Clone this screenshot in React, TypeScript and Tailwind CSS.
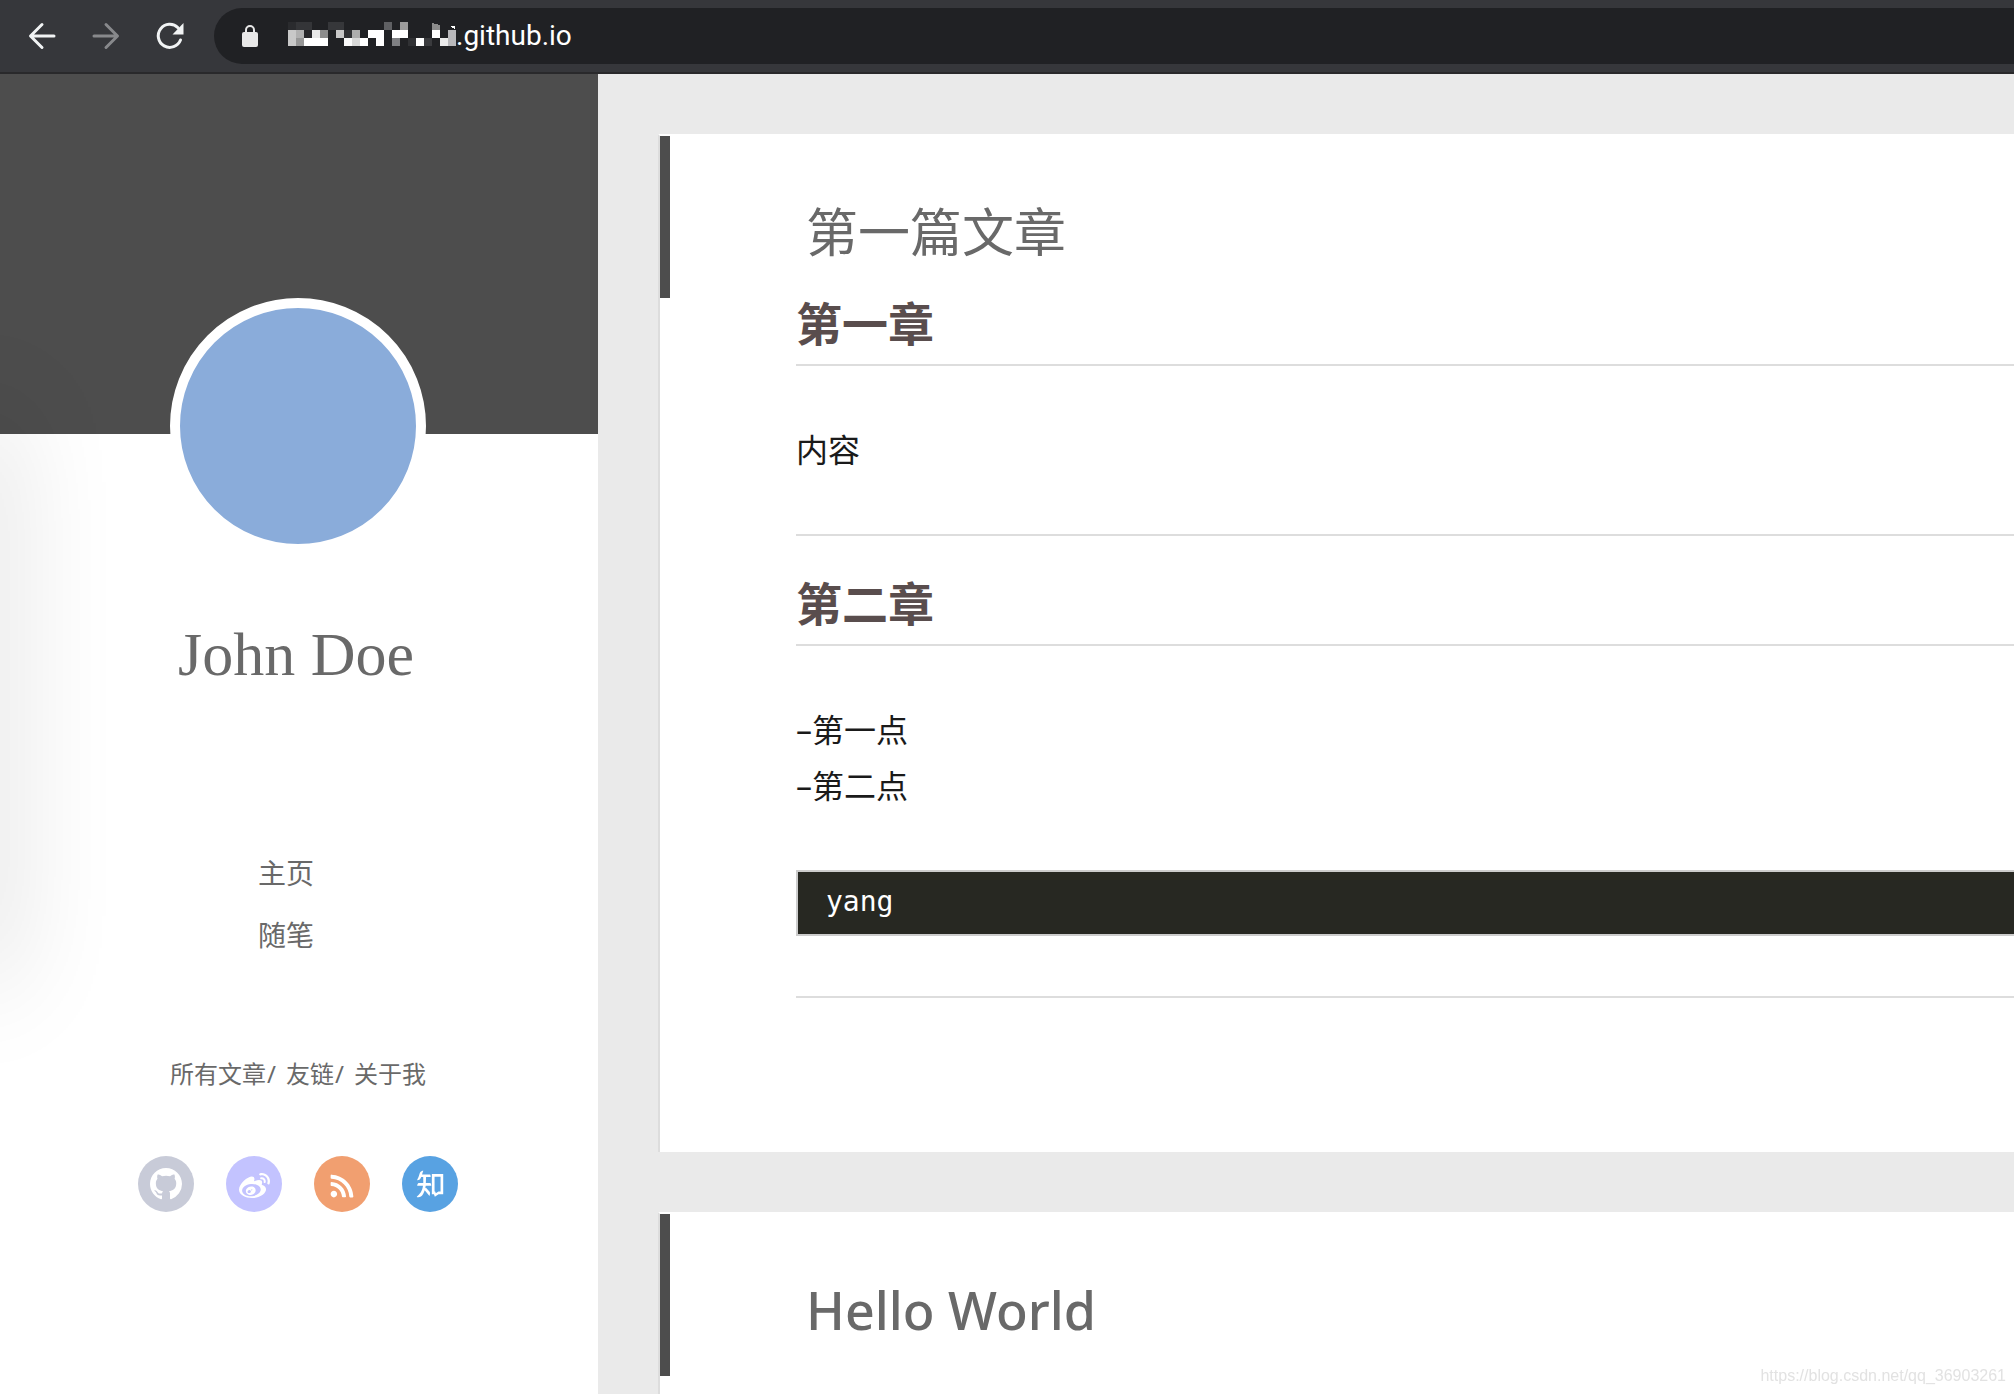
import { AiOutlineZhihu } from "react-icons/ai";
import { FaRss, FaWeibo } from "react-icons/fa";

const menu = ["主页", "随笔"];
const subMenu = ["所有文章", "友链", "关于我"];

// [column, row, fill] of the blurred part of the address
const blurCells: [number, number, string][] = [
    [0, 0, "#2a2b2e"], [1, 0, "#343538"], [2, 0, "#343538"], [5, 0, "#36373a"], [6, 0, "#36373a"],
    [12, 0, "#5f6063"], [14, 0, "#9c9c9c"],
    [0, 1, "#c8c8c8"], [1, 1, "#b0b0b0"], [2, 1, "#262629"], [3, 1, "#e8e8e8"], [4, 1, "#8c8c8c"],
    [6, 1, "#c8c8c8"], [7, 1, "#303134"], [8, 1, "#adadad"], [10, 1, "#ffffff"], [11, 1, "#ffffff"],
    [13, 1, "#ffffff"], [14, 1, "#ffffff"], [18, 1, "#ffffff"], [20, 1, "#b8b8bb"],
    [0, 2, "#c8c8c8"], [1, 2, "#969696"], [2, 2, "#ffffff"], [3, 2, "#ffffff"], [4, 2, "#ffffff"],
    [7, 2, "#fafafa"], [8, 2, "#d8d8d8"], [9, 2, "#ffffff"], [11, 2, "#ffffff"], [13, 2, "#7f8083"],
    [15, 2, "#303134"], [16, 2, "#ffffff"], [17, 2, "#3a3b3e"], [19, 2, "#ebebeb"], [20, 2, "#b8b8bb"],
];

const BrowserBar = () => {
    return (
        <header className="flex items-center h-[74px] shrink-0 bg-[#36373b] border-b-2 border-[#29292b]">
            <div className="flex items-center gap-7 pl-6 pr-[26px]">
                <button aria-label="Back" className="size-9 text-[#f1f3f4]">
                    <svg viewBox="0 0 36 36" fill="none" stroke="currentColor" strokeWidth="3" strokeLinecap="round" strokeLinejoin="round">
                        <path d="M30 18H7M18 6.500L6.500 18L18 29.500" />
                    </svg>
                </button>
                <button aria-label="Forward" className="size-9 text-[#88898c]">
                    <svg viewBox="0 0 36 36" fill="none" stroke="currentColor" strokeWidth="3" strokeLinecap="round" strokeLinejoin="round">
                        <path d="M6 18H29M18 6.500L29.500 18L18 29.500" />
                    </svg>
                </button>
                <button aria-label="Reload" className="size-9 text-[#f1f3f4]">
                    <svg viewBox="0 0 36 36" fill="none">
                        <path d="M28.500 22A11.500 11.500 0 1 1 26 9.800" stroke="currentColor" strokeWidth="3" strokeLinecap="round" />
                        <path d="M31.500 5V16.500H20.500Z" fill="currentColor" />
                    </svg>
                </button>
            </div>
            <div className="flex flex-1 items-center h-14 pl-7 bg-[#202124] rounded-l-full">
                <svg className="w-4 h-[22px] shrink-0" viewBox="0 0 16 22">
                    <path d="M4 9V5a4 4 0 0 1 8 0V9" fill="none" stroke="#e8e8e8" strokeWidth="2" />
                    <rect y="7" width="16" height="15" rx="2" fill="#e8e8e8" />
                </svg>
                <svg className="w-[168px] h-6 ml-[30px] mb-1 shrink-0" viewBox="0 0 168 24" shapeRendering="crispEdges">
                    {blurCells.map(([col, row, fill]) => (
                        <rect key={`${col}-${row}`} x={col * 8} y={row * 8} width="8" height="8" fill={fill} />
                    ))}
                    <path d="M144 1L152 3V8H144Z" fill="#8c8c8c" />
                    <path d="M162 4H167V7Z" fill="#ffffff" />
                </svg>
                <input
                    aria-label="Address"
                    defaultValue=".github.io"
                    className="flex-1 min-w-0 h-10 bg-transparent text-[28px] text-white outline-none font-['Roboto',sans-serif]"
                />
            </div>
        </header>
    );
};

const Sidebar = () => {
    return (
        <aside className="relative w-[598px] shrink-0 bg-white text-[#696969]">
            <div className="h-[360px] bg-[#4d4d4d]" />
            <div className="flex flex-col items-center -mt-[136px] pr-0.5">
                <div className="size-64 rounded-full border-10 border-white bg-[#8aacda]" />
                <h1 className="mt-16 mr-1 text-[62px] leading-[72px] font-['Liberation_Serif',serif]">
                    <a href="#">John Doe</a>
                </h1>
                <nav className="mt-[152px] mr-6">
                    <ul>
                        {menu.map((item) => (
                            <li key={item} className="text-[28px] leading-[62px]">
                                <a href="#">{item}</a>
                            </li>
                        ))}
                    </ul>
                </nav>
                <nav className="flex mt-[90px] text-2xl leading-9">
                    {subMenu.map((item, i) => (
                        <div key={item} className="flex">
                            <a href="#">{item}</a>
                            {i < subMenu.length - 1 && <span className="w-5 pl-px">/</span>}
                        </div>
                    ))}
                </nav>
                <div className="flex gap-8 mt-16 text-white">
                    <a href="#" aria-label="GitHub" className="flex items-center justify-center size-14 rounded-full bg-[#c8cbd8]">
                        <svg className="size-8" viewBox="0 0 16 16" fill="currentColor">
                            <path d="M8 0C3.580 0 0 3.580 0 8c0 3.540 2.290 6.530 5.470 7.590.4.070.550-.170.550-.380 0-.190-.010-.820-.010-1.490-2.010.370-2.530-.490-2.690-.940-.090-.230-.480-.940-.820-1.130-.280-.150-.680-.520-.010-.530.630-.010 1.080.580 1.230.820.720 1.210 1.870.870 2.330.660.070-.520.280-.870.510-1.070-1.780-.2-3.640-.890-3.640-3.950 0-.870.310-1.590.820-2.150-.080-.2-.360-1.020.080-2.120 0 0 .670-.210 2.200.820.640-.180 1.320-.270 2-.270s1.360.090 2 .270c1.530-1.040 2.200-.820 2.200-.820.440 1.100.160 1.920.080 2.120.510.560.820 1.270.820 2.150 0 3.070-1.870 3.750-3.650 3.950.290.250.540.730.540 1.480 0 1.070-.010 1.930-.010 2.200 0 .210.150.460.550.380A8.010 8.010 0 0 0 16 8c0-4.420-3.580-8-8-8z" />
                        </svg>
                    </a>
                    <a href="#" aria-label="Weibo" className="flex items-center justify-center size-14 rounded-full bg-[#c3c3ff]">
                        <FaWeibo className="size-[31px] mt-1" />
                    </a>
                    <a href="#" aria-label="RSS" className="flex items-center justify-center size-14 rounded-full bg-[#f19f70]">
                        <FaRss className="size-[26px] mt-1" />
                    </a>
                    <a href="#" aria-label="知乎" className="flex items-center justify-center size-14 rounded-full bg-[#58a2e2]">
                        <AiOutlineZhihu className="size-9" />
                    </a>
                </div>
            </div>
            {/* soft shade coming in from the left edge */}
            <div className="absolute top-[340px] -left-10 w-10 h-[570px] shadow-[0_0_110px_rgba(0,0,0,0.2)]" />
        </aside>
    );
};

const ArticleHeader = ({ title, className = "" }: { title: string; className?: string }) => {
    return (
        <div className="h-[162px] pt-[60px] pl-[136px] border-l-10 border-[#4d4d4d]">
            <h2 className={`text-[52px] leading-[72px] text-[#696969] ${className}`}>
                <a href="#">{title}</a>
            </h2>
        </div>
    );
};

const Heading = ({ children }: { children: string }) => {
    return (
        <h3 className="pb-4 border-b-2 border-[#dddddd] text-[46px] leading-[50px] font-bold text-[#594d4d]">
            {children}
        </h3>
    );
};

const App = () => {
    return (
        <div className="flex flex-col h-screen overflow-hidden font-['Noto_Sans','Noto_Sans_CJK_SC',sans-serif]">
            <BrowserBar />
            <div className="flex flex-1 min-h-0 overflow-hidden bg-[#eaeaea]">
                <Sidebar />
                <main className="flex-1 min-w-0 pt-[60px] pl-[60px]">
                    <article className="bg-white border-t-2 border-l-2 border-t-white border-l-[#dddddd]">
                        <ArticleHeader title="第一篇文章" />
                        <div className="pl-[136px] pb-[154px] text-[32px] leading-[56px] text-[#1a1a1a]">
                            <Heading>第一章</Heading>
                            <p className="my-14">内容</p>
                            <hr className="mb-[42px] border-t-2 border-[#dddddd]" />
                            <Heading>第二章</Heading>
                            <p className="my-14">
                                –第一点
                                <br />
                                –第二点
                            </p>
                            <pre className="h-[66px] pl-7 border-2 border-r-0 border-[#cccccc] bg-[#272822] text-white text-[28px] leading-[60px]">
                                <code className="font-['DejaVu_Sans_Mono',monospace]">yang</code>
                            </pre>
                            <hr className="mt-[60px] border-t-2 border-[#dddddd]" />
                        </div>
                    </article>
                    <article className="mt-[60px] pb-14 bg-white border-t-2 border-l-2 border-t-white border-l-[#dddddd]">
                        <ArticleHeader title="Hello World" className="font-medium" />
                    </article>
                </main>
            </div>
            <span className="fixed right-2 bottom-2 text-base leading-5 text-[#e2e2e2] font-['Liberation_Sans',sans-serif]">
                https://blog.csdn.net/qq_36903261
            </span>
        </div>
    );
};

export default App;
